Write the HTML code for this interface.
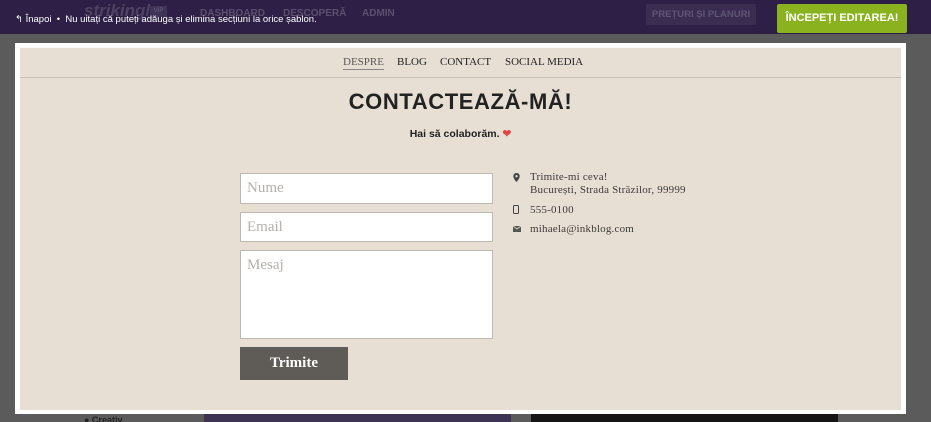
<!DOCTYPE html>
<html><head><meta charset="utf-8"><style>
*{margin:0;padding:0;box-sizing:border-box}
html,body{width:931px;height:422px;overflow:hidden}
body{background:#5b5b5b;position:relative;font-family:"Liberation Sans",sans-serif}
.top{position:absolute;left:0;top:0;width:931px;height:34px;background:#2e1f46}
.abs{position:absolute;white-space:nowrap}
.frame{position:absolute;left:15px;top:43px;width:891px;height:371px;background:#fff}
.in{position:absolute;left:20px;top:48px;width:881px;height:362px;background:#e8dfd4}
.serif{font-family:"Liberation Serif",serif}
.inp{position:absolute;left:240px;width:253px;background:#fff;border:1px solid #bdb8b2;font-family:"Liberation Serif",serif;font-size:15px;color:#b5b0aa;padding:6px 0 0 6px}
.info{font-family:"Liberation Serif",serif;font-size:11px;color:#3c3a38;line-height:13px;letter-spacing:.2px}
</style></head><body>
<div class="top"></div>
<div class="abs" style="left:84px;top:1px;font:italic bold 17px 'Liberation Sans';color:#4e4262">strikingly</div>
<div class="abs" style="left:150px;top:6px;width:17px;height:11px;background:#3f3357;font-size:6px;color:#6d6283;text-align:center;line-height:11px">VIP</div>
<div class="abs" style="left:200px;top:8px;font-size:10px;font-weight:bold;color:#5a4f6e">DASHBOARD</div>
<div class="abs" style="left:283px;top:8px;font-size:10px;font-weight:bold;color:#5a4f6e">DESCOPERĂ</div>
<div class="abs" style="left:362px;top:8px;font-size:10px;font-weight:bold;color:#5a4f6e">ADMIN</div>
<div class="abs" style="left:15px;top:14px;font-size:9.5px;color:#fff">↰ Înapoi &nbsp;•&nbsp; Nu uitați că puteți adăuga și elimina secțiuni la orice șablon.</div>
<div class="abs" style="left:646px;top:4px;width:110px;height:21px;background:#3b2d52;border-radius:2px;font-size:9.5px;font-weight:bold;color:#5f5574;text-align:center;line-height:21px">PREȚURI ȘI PLANURI</div>
<div class="abs" style="left:777px;top:4px;width:130px;height:29px;background:#8ab21f;border-radius:2px;font-size:11px;font-weight:bold;color:#fff;text-align:center;line-height:29px">ÎNCEPEȚI EDITAREA!</div>
<div class="frame"></div>
<div class="in"></div>
<div class="abs serif" style="left:343px;top:56px;font-size:11px;color:#5a5855;border-bottom:1px solid #8a8580;padding-bottom:1px">DESPRE</div>
<div class="abs serif" style="left:397px;top:56px;font-size:11px;color:#222">BLOG</div>
<div class="abs serif" style="left:440px;top:56px;font-size:11px;color:#222">CONTACT</div>
<div class="abs serif" style="left:505px;top:56px;font-size:11px;color:#222">SOCIAL MEDIA</div>
<div class="abs" style="left:20px;top:77px;width:881px;height:1px;background:#c9c0b5"></div>
<div class="abs" style="left:20px;top:89px;width:881px;text-align:center;font-size:22px;font-weight:bold;color:#222;letter-spacing:.6px">CONTACTEAZĂ-MĂ!</div>
<div class="abs" style="left:20px;top:128px;width:881px;text-align:center;font-size:10.5px;font-weight:bold;color:#222">Hai să colaborăm. <span style="color:#e04848">❤</span></div>
<div class="inp" style="top:173px;height:31px">Nume</div>
<div class="inp" style="top:212px;height:30px">Email</div>
<div class="inp" style="top:250px;height:89px">Mesaj</div>
<div class="abs serif" style="left:240px;top:347px;width:108px;height:33px;background:#5f5b56;color:#fff;font-size:15px;font-weight:bold;text-align:center;line-height:33px">Trimite</div>
<svg class="abs" style="left:513px;top:173px" width="7" height="9" viewBox="0 0 7 9"><path d="M3.5 0a3.2 3.2 0 0 0-3.2 3.2C.3 5.5 3.5 9 3.5 9s3.2-3.5 3.2-5.8A3.2 3.2 0 0 0 3.5 0zm0 4.4a1.2 1.2 0 1 1 0-2.4 1.2 1.2 0 0 1 0 2.4z" fill="#444"/></svg>
<div class="abs info" style="left:530px;top:171px">Trimite-mi ceva!<br>București, Strada Străzilor, 99999</div>
<svg class="abs" style="left:513px;top:205px" width="6" height="9"><rect x=".5" y=".5" width="5" height="8" rx="1" fill="none" stroke="#444"/></svg>
<div class="abs info" style="left:530px;top:204px">555-0100</div>
<svg class="abs" style="left:513px;top:226px" width="8" height="6"><rect width="8" height="6" fill="#555"/><path d="M0 0l4 3 4-3" stroke="#e8dfd4" fill="none" stroke-width=".8"/></svg>
<div class="abs info" style="left:530px;top:223px">mihaela@inkblog.com</div>
<div class="abs" style="left:204px;top:414px;width:307px;height:8px;background:#3d3352"></div>
<div class="abs" style="left:531px;top:414px;width:307px;height:8px;background:#151515"></div>
<div class="abs" style="left:84px;top:415px;font-size:9px;font-weight:bold;color:#222;line-height:10px">● Creativ</div>
</body></html>
